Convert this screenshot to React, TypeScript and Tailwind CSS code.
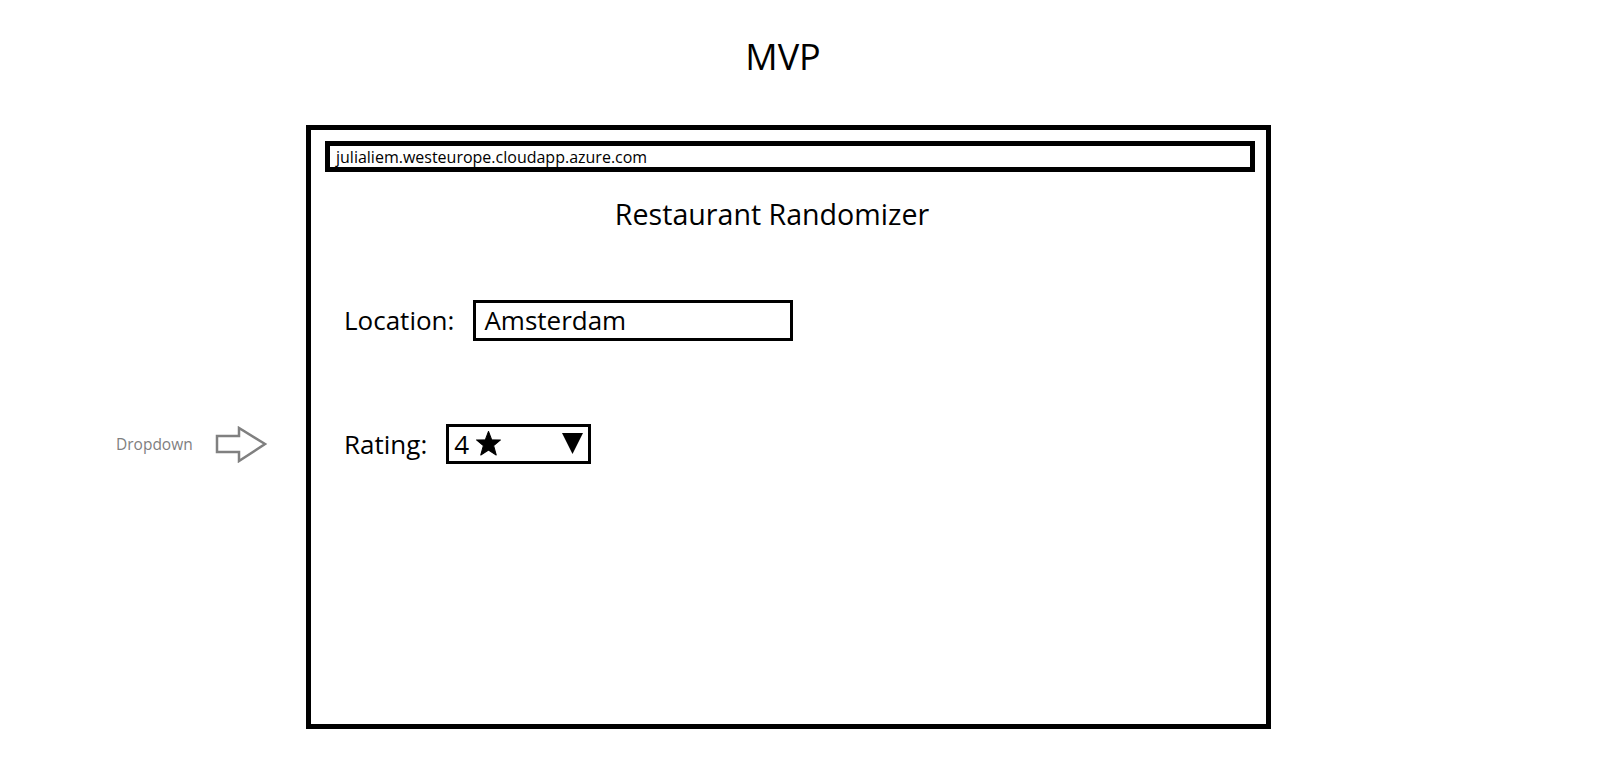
import React from "react";

// Wireframe mockup: "MVP" of a restaurant randomizer page.
const font = { fontFamily: '"Open Sans", "Noto Sans", sans-serif' };

function HollowArrow() {
  return (
    <svg width="54" height="37" viewBox="0 0 54 37" className="block">
      <polygon
        points="3,10 25,10 25,2 51,18 25,35 25,26 3,26"
        fill="white"
        stroke="#808080"
        strokeWidth="2.5"
      />
    </svg>
  );
}

function Star() {
  return (
    <svg width="25" height="25" viewBox="0 0 24 24" className="block">
      <polygon
        points="12,0.5 15,8.3 23.5,8.6 16.9,14.1 19.4,23 12,18.2 4.6,23 7.1,14.1 0.5,8.6 9,8.3"
        fill="black"
        stroke="black"
        strokeWidth="1"
        strokeLinejoin="round"
      />
    </svg>
  );
}

function CaretDown() {
  return (
    <svg width="21" height="21" viewBox="0 0 21 21" className="block">
      <polygon points="0,0 21,0 10.5,21" fill="black" />
    </svg>
  );
}

export default function App() {
  return (
    <div className="min-h-screen bg-white text-black" style={font}>
      <h1 className="pt-[39px] pr-[34px] text-center text-[36px] leading-none font-normal">
        MVP
      </h1>

      <div className="mt-[50px] flex">
        <div className="w-[306px] shrink-0">
          <div className="mt-[301px] flex items-center">
            <span className="ml-[116px] text-[15.5px] leading-none text-[#7f7f7f]">Dropdown</span>
            <span className="ml-[21px]">
              <HollowArrow />
            </span>
          </div>
        </div>

        <div className="h-[604px] w-[965px] shrink-0 border-[5px] border-black">
          <div className="ml-[14px] mt-[11px] flex h-[31px] w-[930px] items-center border-[5px] border-black pl-[6px]">
            <span className="text-[16px] leading-none">julialiem.westeurope.cloudapp.azure.com</span>
          </div>

          <div className="mt-[28px] pr-[33px] text-center text-[28.6px] leading-none">
            Restaurant Randomizer
          </div>

          <div className="mt-[71px] flex items-center pl-[33px]">
            <span className="text-[26px] leading-none">Location:</span>
            <div className="ml-[19px] flex h-[41px] w-[320px] items-center border-[3px] border-black pl-[8px]">
              <span className="text-[26px] leading-none">Amsterdam</span>
            </div>
          </div>

          <div className="mt-[83px] flex items-center pl-[33px]">
            <span className="text-[26px] leading-none">Rating:</span>
            <div className="ml-[19px] flex h-[40px] w-[145px] items-center border-[3px] border-black pl-[5px] pr-[5px]">
              <span className="text-[26px] leading-none">4</span>
              <span className="ml-[7px]">
                <Star />
              </span>
              <span className="ml-auto">
                <CaretDown />
              </span>
            </div>
          </div>
        </div>
      </div>
    </div>
  );
}
